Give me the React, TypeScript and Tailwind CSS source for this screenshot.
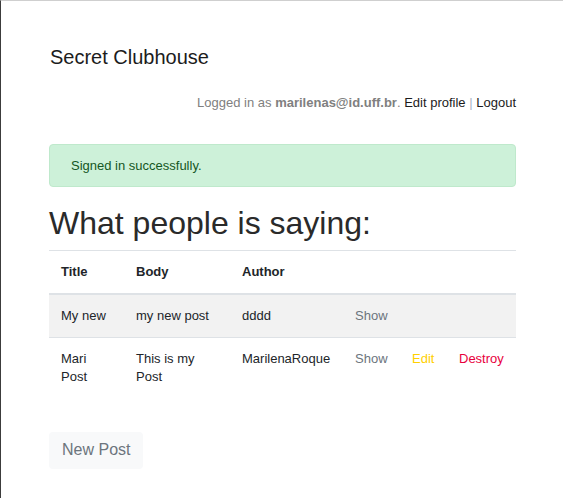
import React from 'react';

const posts = [
  { title: 'My new', body: 'my new post', author: 'dddd', own: false },
  { title: 'Mari Post', body: 'This is my Post', author: 'MarilenaRoque', own: true },
];

export default function App() {
  return (
    <div
      className="min-h-[498px] w-[563px] border-l border-t border-l-[#3c3c3c] border-t-[#cfcfcf] bg-white text-[#212529]"
      style={{ fontFamily: '"Liberation Sans", Arial, sans-serif' }}
    >
      <div className="ml-[48px] w-[467px]">
        {/* Header */}
        <div className="pt-[44px] pl-[1px] text-[20px] leading-[24px] text-[#1c1c1c]">Secret Clubhouse</div>

        <div className="mt-[24px] text-right text-[13px] leading-[20px]">
          <span className="text-[#808080]">
            Logged in as <b className="font-bold">marilenas@id.uff.br</b>.
          </span>{' '}
          <a className="text-[#1c1c1c]">Edit profile</a> <span className="text-[#a8b4c4]">|</span>{' '}
          <a className="text-[#1c1c1c]">Logout</a>
        </div>

        {/* Flash */}
        <div className="mt-[31px] h-[43px] rounded-[4px] border border-[#bfe9cc] bg-[#cdf1d9] px-[21px] text-[13px] leading-[41px] text-[#155724]">
          Signed in successfully.
        </div>

        <h1 className="mt-[15px] text-[32px] leading-[42px] text-[#2a2a2a]">What people is saying:</h1>

        {/* Posts */}
        <table className="mt-[6px] w-full table-fixed border-collapse text-[13px] leading-[18px]">
          <colgroup>
            <col className="w-[75px]" />
            <col className="w-[106px]" />
            <col className="w-[113px]" />
            <col className="w-[57px]" />
            <col className="w-[47px]" />
            <col className="w-[69px]" />
          </colgroup>
          <thead>
            <tr className="border-t border-b-2 border-t-[#dee2e6] border-b-[#dee2e6]">
              <th className="h-[43px] px-[12px] text-left font-bold">Title</th>
              <th className="px-[12px] text-left font-bold">Body</th>
              <th className="px-[12px] text-left font-bold">Author</th>
              <th className="px-[12px]" />
              <th className="px-[12px]" />
              <th className="px-[12px]" />
            </tr>
          </thead>
          <tbody>
            {posts.map((p, i) => (
              <tr key={i} className={i % 2 === 0 ? 'border-b border-[#dee2e6] bg-[#f2f2f2]' : ''}>
                <td className="px-[12px] py-[12px] align-top">{p.title}</td>
                <td className="px-[12px] py-[12px] align-top">{p.body}</td>
                <td className="px-[12px] py-[12px] align-top">{p.author}</td>
                <td className="px-[12px] py-[12px] align-top text-[#6c757d]">Show</td>
                <td className="px-[12px] py-[12px] align-top text-[#ffd000]">{p.own ? 'Edit' : ''}</td>
                <td className="px-[12px] py-[12px] align-top text-[#e8003c]">{p.own ? 'Destroy' : ''}</td>
              </tr>
            ))}
          </tbody>
        </table>

        <button className="mt-[34px] h-[37px] rounded-[4px] bg-[#f8f9fa] px-[13px] text-[16px] text-[#6c757d]">
          New Post
        </button>
      </div>
    </div>
  );
}
